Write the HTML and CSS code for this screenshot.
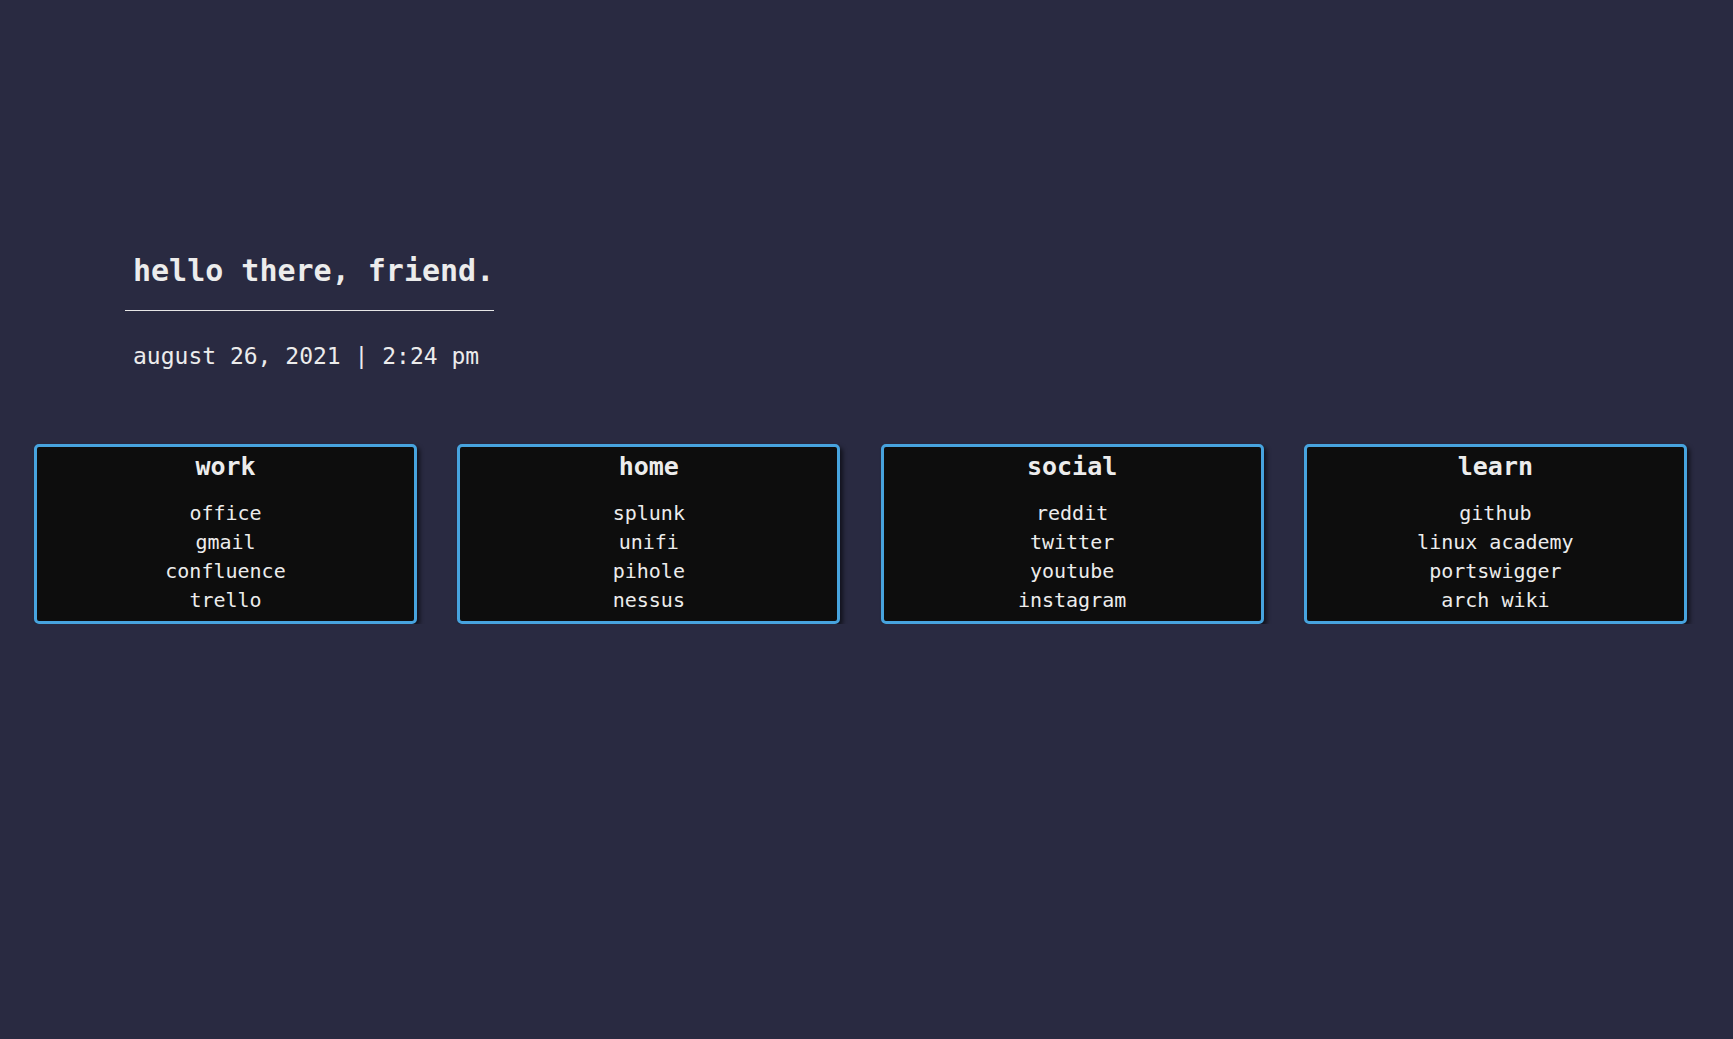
FILE: index.html
```html
<!DOCTYPE html>
<html>
<head>
<meta charset="utf-8">
<link rel="stylesheet" href="styles.css">
<title>start</title>
</head>
<body>
<div class="page">
  <header class="intro">
    <h1 class="greeting">hello there, friend.</h1>
    <p class="date">august 26, 2021 | 2:24 pm</p>
  </header>
  <section class="cards">
    <div class="card">
      <h2 class="card-title">work</h2>
      <ul class="links">
        <li>office</li>
        <li>gmail</li>
        <li>confluence</li>
        <li>trello</li>
      </ul>
    </div>
    <div class="card">
      <h2 class="card-title">home</h2>
      <ul class="links">
        <li>splunk</li>
        <li>unifi</li>
        <li>pihole</li>
        <li>nessus</li>
      </ul>
    </div>
    <div class="card">
      <h2 class="card-title">social</h2>
      <ul class="links">
        <li>reddit</li>
        <li>twitter</li>
        <li>youtube</li>
        <li>instagram</li>
      </ul>
    </div>
    <div class="card">
      <h2 class="card-title">learn</h2>
      <ul class="links">
        <li>github</li>
        <li>linux academy</li>
        <li>portswigger</li>
        <li>arch wiki</li>
      </ul>
    </div>
  </section>
</div>
</body>
</html>
```

FILE: styles.css
```css
html, body {
  margin: 0;
  padding: 0;
  background: #292a41;
  color: #ececec;
  font-family: "DejaVu Sans Mono", "Liberation Mono", monospace;
}

.page {
  padding-top: 253px;
}

.intro {
  padding-left: 125px;
}

.greeting {
  display: inline-block;
  margin: 0;
  padding: 0 0 22px 8px;
  font-size: 30px;
  font-weight: bold;
  line-height: normal;
  border-bottom: 1px solid #e6e6e6;
}

.date {
  margin: 32px 0 0 0;
  padding-left: 8px;
  font-size: 23px;
  line-height: normal;
}

.cards {
  display: flex;
  gap: 40.3px;
  padding-left: 34px;
  margin-top: 75px;
}

.card {
  box-sizing: border-box;
  width: 383px;
  height: 180px;
  background: #0d0d0d;
  border: 3px solid #47a3de;
  border-radius: 5px;
  box-shadow: 3px 3px 4px rgba(0, 0, 0, 0.55);
  padding: 5px 0 6px;
  text-align: center;
}

.card-title {
  margin: 0 0 18px 0;
  font-size: 25px;
  font-weight: bold;
  line-height: normal;
}

.links {
  list-style: none;
  margin: 0;
  padding: 0;
  font-size: 20px;
  line-height: 29px;
}
```
